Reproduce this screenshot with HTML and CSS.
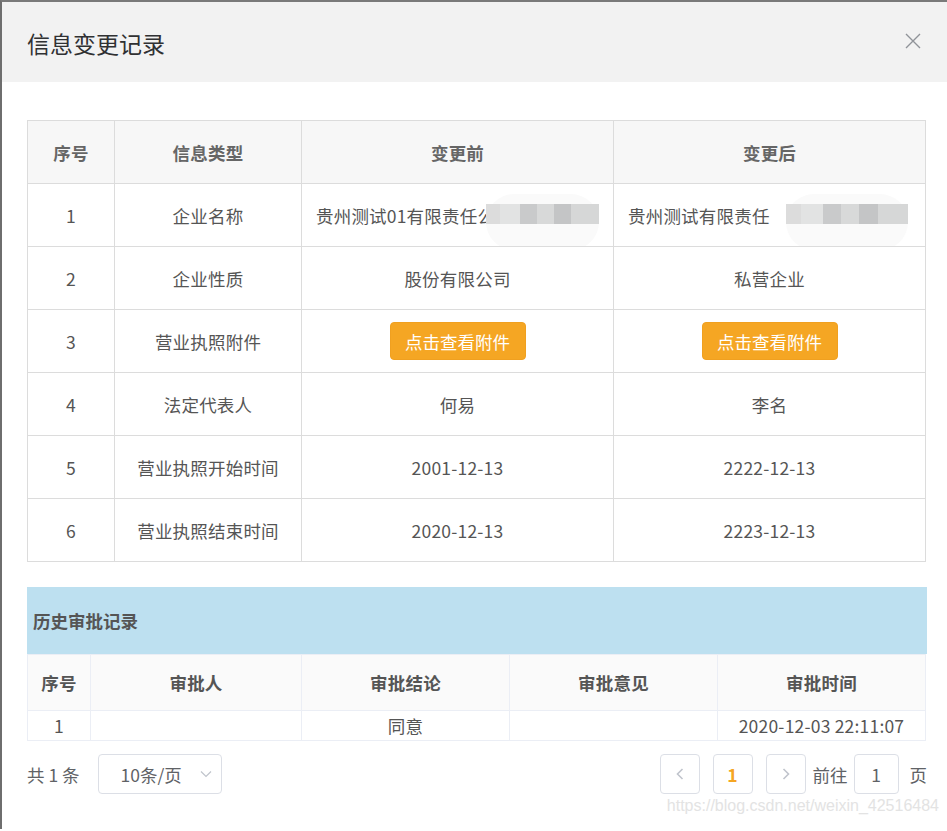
FILE: index.html
```html
<!DOCTYPE html>
<html lang="zh-CN">
<head>
    <meta charset="UTF-8">
    <title>信息变更记录</title>
    <link rel="stylesheet" href="styles.css">
</head>
<body>
    <div class="dialog">
        <div class="dialog-header">
            <span class="dialog-title">信息变更记录</span>
            <span class="dialog-close">
                <svg width="16" height="16" viewBox="0 0 16 16"><path d="M1 1L15 15M15 1L1 15" stroke="#909399" stroke-width="1.4" fill="none"/></svg>
            </span>
        </div>

        <div class="dialog-body">
            <table class="change-table">
                <colgroup>
                    <col style="width:87px">
                    <col style="width:187px">
                    <col style="width:312px">
                    <col style="width:312px">
                </colgroup>
                <thead>
                    <tr><th>序号</th><th>信息类型</th><th>变更前</th><th>变更后</th></tr>
                </thead>
                <tbody>
                    <tr>
                        <td>1</td><td>企业名称</td>
                        <td class="masked"><span>贵州测试01有限责任公</span><i class="blur b1"></i></td>
                        <td class="masked"><span>贵州测试有限责任</span><i class="blur b2"></i></td>
                    </tr>
                    <tr><td>2</td><td>企业性质</td><td>股份有限公司</td><td>私营企业</td></tr>
                    <tr>
                        <td>3</td><td>营业执照附件</td>
                        <td><button class="btn-file">点击查看附件</button></td>
                        <td><button class="btn-file">点击查看附件</button></td>
                    </tr>
                    <tr><td>4</td><td>法定代表人</td><td>何易</td><td>李名</td></tr>
                    <tr><td>5</td><td>营业执照开始时间</td><td>2001-12-13</td><td>2222-12-13</td></tr>
                    <tr><td>6</td><td>营业执照结束时间</td><td>2020-12-13</td><td>2223-12-13</td></tr>
                </tbody>
            </table>

            <div class="history-title">历史审批记录</div>
            <table class="history-table">
                <colgroup>
                    <col style="width:63px">
                    <col style="width:211px">
                    <col style="width:208px">
                    <col style="width:208px">
                    <col style="width:208px">
                </colgroup>
                <thead>
                    <tr><th>序号</th><th>审批人</th><th>审批结论</th><th>审批意见</th><th>审批时间</th></tr>
                </thead>
                <tbody>
                    <tr><td>1</td><td></td><td>同意</td><td></td><td>2020-12-03 22:11:07</td></tr>
                </tbody>
            </table>

            <div class="pager">
                <div class="pager-left">
                    <span class="total">共 1 条</span>
                    <div class="size-select">
                        <span>10条/页</span>
                        <svg width="12" height="8" viewBox="0 0 12 8"><path d="M1 1.5L6 6.5L11 1.5" stroke="#c0c4cc" stroke-width="1.2" fill="none"/></svg>
                    </div>
                </div>
                <div class="pager-right">
                    <span class="page-btn">
                        <svg width="8" height="12" viewBox="0 0 8 12"><path d="M6.5 1L1.5 6L6.5 11" stroke="#c0c4cc" stroke-width="1.6" fill="none"/></svg>
                    </span>
                    <span class="page-btn active">1</span>
                    <span class="page-btn">
                        <svg width="8" height="12" viewBox="0 0 8 12"><path d="M1.5 1L6.5 6L1.5 11" stroke="#c0c4cc" stroke-width="1.6" fill="none"/></svg>
                    </span>
                    <span class="jump">前往</span>
                    <span class="jump-input">1</span>
                    <span class="jump">页</span>
                </div>
            </div>
            <div class="watermark">https://blog.csdn.net/weixin_42516484</div>
        </div>
    </div>
</body>
</html>
```

FILE: styles.css
```css
html, body {
    margin: 0;
    padding: 0;
    background: #fff;
}
body {
    font-family: "Noto Sans CJK SC", "Liberation Sans", sans-serif;
    color: #606266;
    width: 947px;
    height: 831px;
    overflow: hidden;
}
.dialog {
    border-left: 2px solid #6e6e6e;
    border-top: 2px solid #7a7a7a;
    height: 829px;
    box-sizing: border-box;
}
.dialog-header {
    background: #f2f2f2;
    height: 80px;
    display: flex;
    align-items: center;
    justify-content: space-between;
    padding: 0 26px 0 25px;
}
.dialog-title {
    font-size: 23px;
    color: #303133;
    margin-top: 2px;
}
.dialog-close {
    display: flex;
    margin-top: -3px;
}
.dialog-body {
    padding: 38px 20px 0 25px;
}
table {
    border-collapse: collapse;
    table-layout: fixed;
    width: 898px;
}
.change-table th,
.change-table td {
    border: 1px solid #dcdcdc;
    height: 62px;
    text-align: center;
    font-size: 17.5px;
    padding: 0;
    letter-spacing: 0.2px;
}
.change-table th {
    background: #f7f7f7;
    color: #666;
    font-weight: bold;
}
.change-table td {
    color: #555;
}
.masked {
    position: relative;
    overflow: hidden;
    white-space: nowrap;
}
.masked span {
    display: block;
    text-align: left;
    padding-left: 14px;
}
.blur {
    position: absolute;
    top: 10px;
    height: 56px;
    background: #fafafa;
    border-radius: 28px;
}
.blur::before {
    content: "";
    position: absolute;
    top: 10px;
    left: 0;
    right: 0;
    height: 20px;
    background: linear-gradient(90deg, #dcdcdc 0 12%, #e2e3e3 12% 30%, #c9cacb 30% 45%, #d8d9d9 45% 60%, #c4c5c6 60% 75%, #d6d7d7 75% 100%);
}
.b1 {
    left: 184px;
    width: 113px;
}
.b2 {
    left: 172px;
    width: 122px;
}
.btn-file {
    background: #f5a623;
    color: #fff;
    border: 1px solid #f0a020;
    border-radius: 4px;
    font-family: inherit;
    font-size: 17.5px;
    width: 136px;
    height: 38px;
    padding: 0;
    cursor: pointer;
}
.history-title {
    margin-top: 25px;
    background: #bde0f0;
    height: 67px;
    display: flex;
    align-items: center;
    padding-left: 6px;
    font-size: 17.5px;
    font-weight: bold;
    color: #555;
}
.history-table th,
.history-table td {
    border: 1px solid #ebeef5;
    text-align: center;
    font-size: 17.5px;
    padding: 0;
    letter-spacing: 0.2px;
}
.history-table th {
    background: #fafafa;
    color: #555;
    font-weight: bold;
    height: 55px;
}
.history-table td {
    height: 29px;
    color: #555;
    line-height: 1;
}
.pager {
    display: flex;
    justify-content: space-between;
    align-items: center;
    margin-top: 13px;
    font-size: 17.5px;
}
.pager-left,
.pager-right {
    display: flex;
    align-items: center;
}
.total {
    color: #606266;
    margin-right: 18px;
}
.size-select {
    width: 124px;
    height: 40px;
    box-sizing: border-box;
    border: 1px solid #dcdfe6;
    border-radius: 4px;
    display: flex;
    align-items: center;
    padding: 0 9px 0 22px;
    justify-content: space-between;
    color: #606266;
}
.page-btn {
    width: 40px;
    height: 40px;
    box-sizing: border-box;
    border: 1px solid #dcdfe6;
    border-radius: 4px;
    display: flex;
    align-items: center;
    justify-content: center;
    margin-left: 13px;
    font-weight: bold;
}
.page-btn:first-child {
    margin-left: 0;
}
.page-btn.active {
    color: #f5a623;
}
.jump {
    color: #606266;
    margin-left: 7px;
}
.jump-input {
    width: 45px;
    height: 40px;
    box-sizing: border-box;
    border: 1px solid #dcdfe6;
    border-radius: 4px;
    display: flex;
    align-items: center;
    justify-content: center;
    margin-left: 6px;
    margin-right: 4px;
}
.watermark {
    text-align: right;
    font-family: "Liberation Sans", sans-serif;
    font-size: 16px;
    color: #e3e3e3;
    margin-top: 3px;
    margin-right: -12px;
}
```
